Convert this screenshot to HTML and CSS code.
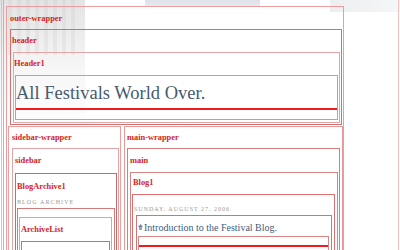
FILE: index.html
```html
<!DOCTYPE html>
<html lang="en">
<head>
  <meta charset="UTF-8">
  <meta name="viewport" content="width=device-width, initial-scale=1.0">
  <title>All Festivals World Over.</title>
  <link rel="stylesheet" href="styles.css">
</head>
<body>

  <div class="page">
    <div class="page-in">

      <div id="outer-wrapper" class="box outer">
        <div class="label lbl-outer">outer-wrapper</div>

        <div id="header" class="box header">
          <div class="label">header</div>

          <div id="Header1" class="box header1">
            <div class="label">Header1</div>
            <div class="box title-box">
              <h1 class="blog-title">All Festivals World Over.</h1>
              <div class="red-line"></div>
            </div>
          </div>
        </div>

        <div class="columns">
          <div id="sidebar-wrapper" class="box sidebar-wrapper">
            <div class="label">sidebar-wrapper</div>

            <div id="sidebar" class="box sidebar">
              <div class="label">sidebar</div>

              <div id="BlogArchive1" class="box archive">
                <div class="label">BlogArchive1</div>
                <h2 class="sidebar-title">Blog Archive</h2>
                <div class="box archive-in">
                  <div id="ArchiveList" class="box archive-list">
                    <div class="label">ArchiveList</div>
                    <div class="box archive-items"></div>
                  </div>
                </div>
              </div>
            </div>
          </div>

          <div id="main-wrapper" class="box main-wrapper">
            <div class="label">main-wrapper</div>

            <div id="main" class="box main">
              <div class="label">main</div>

              <div id="Blog1" class="box blog">
                <div class="label lbl-blog">Blog1</div>
                <div class="box date-box">
                  <h2 class="date-header">Sunday, August 27, 2006</h2>
                  <div class="box post">
                    <h3 class="post-title">
                      <svg class="post-icon" width="5" height="6" viewBox="0 0 5 6">
                        <path d="M2.5 0 L5 3 L0 3 Z" fill="#7488a4"/>
                        <rect x="1" y="3" width="3" height="3" fill="#94a6bc"/>
                      </svg>
                      Introduction to the Festival Blog.
                    </h3>
                    <div class="box post-body">
                      <div class="red-line"></div>
                    </div>
                  </div>
                </div>
              </div>
            </div>
          </div>
        </div>

      </div>

    </div>
  </div>

</body>
</html>
```

FILE: styles.css
```css
* {
  box-sizing: border-box;
}
body {
  margin: 0;
  font-family: "Liberation Serif", serif;
  background:
    linear-gradient(#dde1e8, #e7eaef) 145px 0 / 115px 7px no-repeat,
    linear-gradient(90deg, #eceef1, #f5f6f7) 330px 0 / 70px 12px no-repeat,
    repeating-linear-gradient(90deg, rgba(190,190,190,.2) 0 4px, rgba(255,255,255,0) 4px 9px) 8px 0 / 70px 55px no-repeat,
    linear-gradient(180deg, rgba(200,200,200,.5), rgba(228,228,228,.3) 50%, rgba(255,255,255,0)) 0 0 / 85px 140px no-repeat,
    #fff;
  overflow: hidden;
}
.page {
  margin-left: 1px;
  width: 398px;
  min-height: 250px;
  padding-left: 1px;
  border-left: 1px solid #f1b9b9;
  border-right: 1px solid #f1c4c4;
}
.page-in {
  min-height: 250px;
  padding: 6px 0 0 2px;
  border-left: 1px solid #eba3a3;
}
.box {
  border: 1px solid #dd8a8a;
}
.label {
  font-size: 8.4px;
  line-height: 10px;
  font-weight: bold;
  color: #d42424;
  white-space: nowrap;
}

/* outer */
.outer {
  width: 338px;
  padding: 7px 0 0 0;
  border-color: #ec9c9c;
}
.lbl-outer {
  margin-left: 3px;
}

/* header */
.header {
  margin: 5px 1px 1px 3px;
  padding: 6px 1px 1px 1px;
  border-color: #cc7272;
}
.header1 {
  margin: 6px 0 0 1px;
  padding: 6px 1px 1px 0;
  border-color: #e2a6a6;
}
.title-box {
  margin: 6px 0 1px 1px;
  padding: 6px 0 9px 0;
  border-color: #dd9393;
}
.blog-title {
  margin: 0 0 4px 0;
  font-size: 18.5px;
  line-height: 22px;
  font-weight: normal;
  color: #485a6e;
}
.red-line {
  border-top: 2px solid #ee1c1c;
}

/* columns */
.columns {
  display: flex;
  gap: 3px;
  margin-left: 1px;
}
.sidebar-wrapper {
  width: 113px;
  padding: 6px 1px 0 3px;
  border-color: #eaa0a0;
}
.main-wrapper {
  flex: 1;
  padding: 6px 2px 0 2px;
  border-color: #e59a9a;
}
.sidebar {
  margin-top: 5px;
  padding: 7px 1px 0 2px;
  border-color: #e3a4a4;
}
.archive {
  margin-top: 7px;
  padding: 8px 1px 0 1px;
  border-color: #c96a6a;
}
.sidebar-title,
.date-header {
  margin: 6px 0 2px 0;
  font-size: 6px;
  line-height: 8px;
  font-weight: normal;
  letter-spacing: 1.1px;
  text-transform: uppercase;
  color: #9a9a9a;
  white-space: nowrap;
}
.archive-in {
  padding: 8px 2px 0 1px;
  border-color: #d37a7a;
}
.archive-list {
  padding: 7px 1px 0 1px;
  border-color: #e2a0a0;
}
.archive-items {
  margin-top: 6px;
  height: 40px;
  border-color: #cd6f6f;
}

/* main */
.main {
  margin-top: 5px;
  padding: 7px 1px 0 2px;
  border-color: #d67e7e;
}
.blog {
  margin-top: 6px;
  padding: 5px 1px 0 1px;
  border-color: #d98484;
}
.lbl-blog {
  margin-left: 1px;
}
.date-box {
  margin: 6px 1px 0 0;
  padding: 10px 1px 0 0;
  border-color: #e07070;
}
.date-header {
  margin: 0 0 2px 1px;
  letter-spacing: 1px;
}
.post {
  margin: 0 1px 0 3px;
  padding: 6px 2px 0 1px;
  border-color: #cf7474;
}
.post-title {
  display: flex;
  align-items: center;
  gap: 1px;
  margin: 0;
  font-size: 10px;
  line-height: 12px;
  font-weight: normal;
  color: #3f5b7c;
  white-space: nowrap;
}
.post-icon {
  flex: none;
  margin-top: -2px;
}
.post-body {
  margin: 2px 0 0 0;
  padding-top: 8px;
  height: 40px;
  border-color: #d78585;
}
```
